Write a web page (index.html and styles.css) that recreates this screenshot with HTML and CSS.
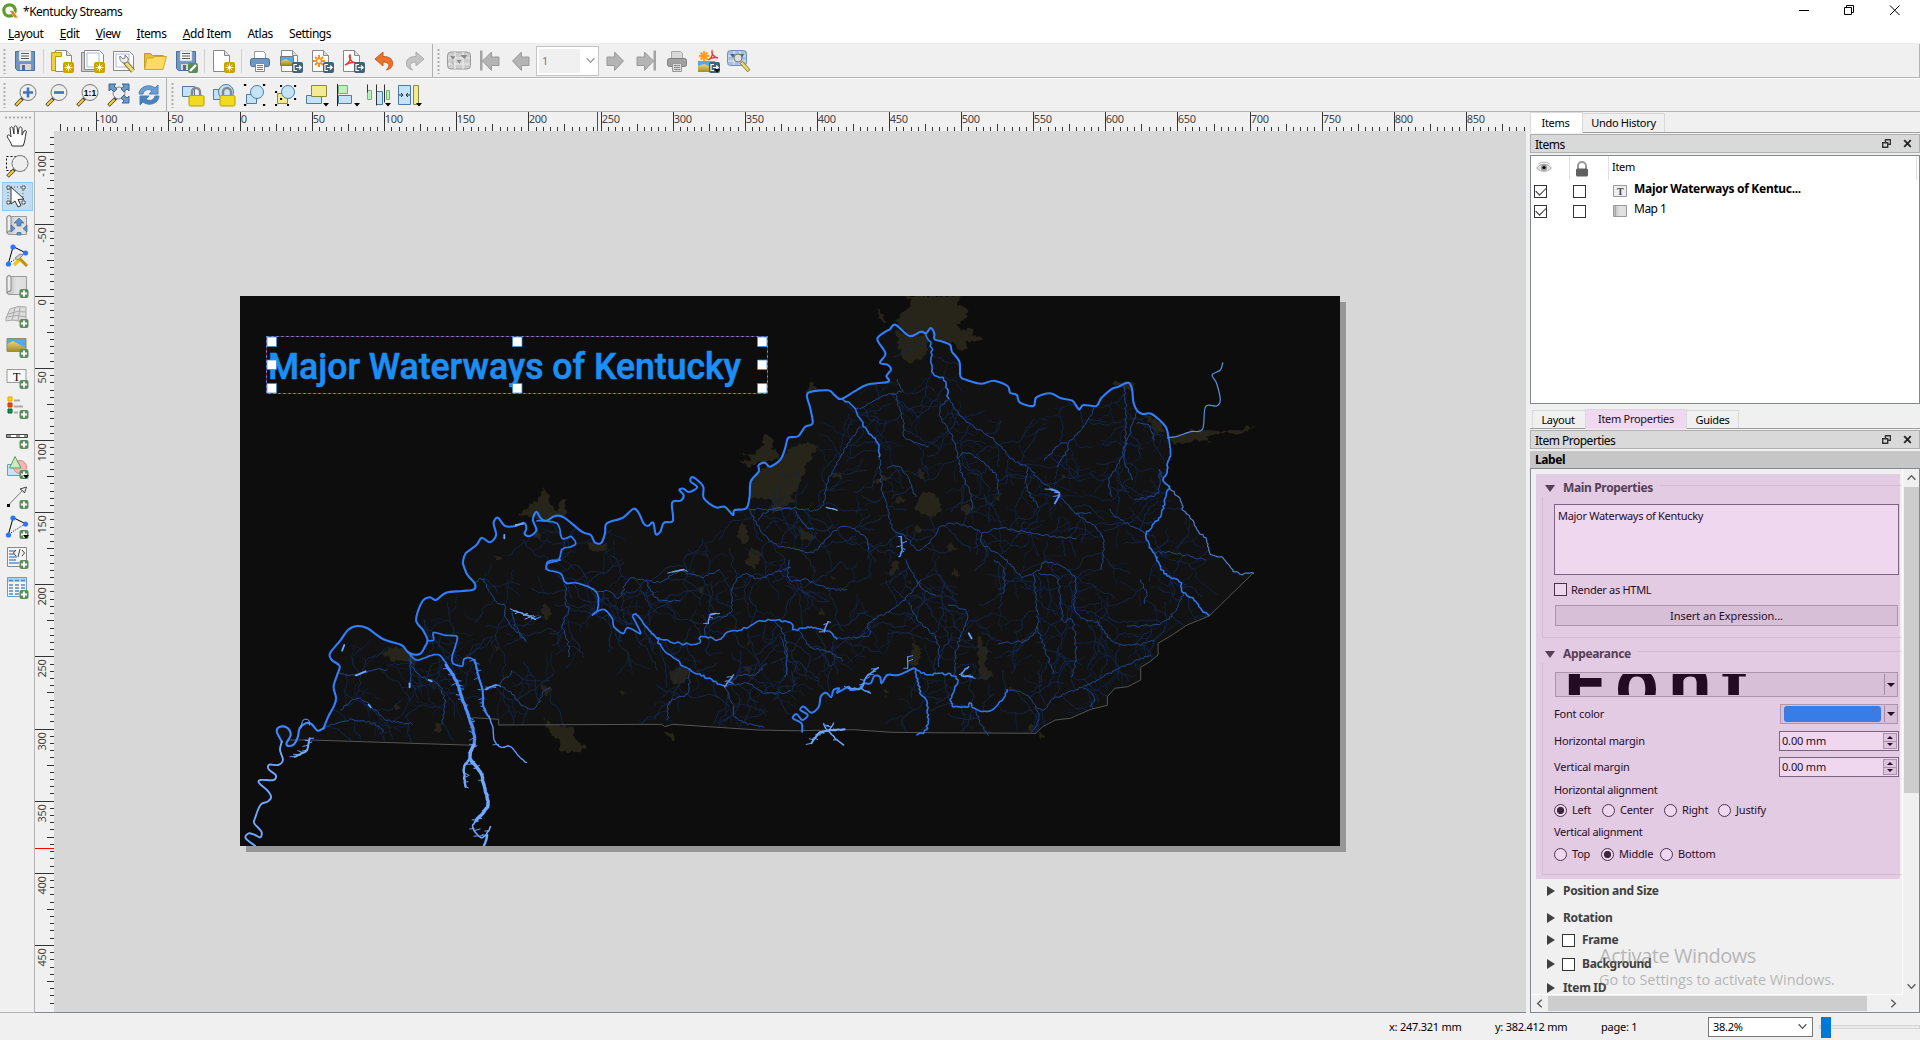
FILE: index.html
```
<!DOCTYPE html>
<html lang="en">
<head>
<meta charset="utf-8">
<title>*Kentucky Streams</title>
<link rel="stylesheet" href="styles.css">
</head>
<body>
<svg width="0" height="0" class="defs">
<defs>
<linearGradient id="paper" x1="0" x2="1"><stop offset="0" stop-color="#bbb"/><stop offset=".5" stop-color="#e2e2e2"/><stop offset="1" stop-color="#ddd"/></linearGradient>
<linearGradient id="sand" x1="0" x2="0" y1="0" y2="1"><stop offset="0" stop-color="#e8d47e"/><stop offset="1" stop-color="#a48c22"/></linearGradient>
<symbol id="floppy" viewBox="0 0 24 24"><path d="M2.5 2.5h19v19h-17l-2-2z" fill="#6d97c4" stroke="#4b6f98"/><path d="M6 2h12v10H6z" fill="#f8f8f8" stroke="#aaa" stroke-width=".6"/><path d="M8 4.500h8M8 7h8M8 9.500h8" stroke="#555"/><path d="M7 15h11v6H7z" fill="#d7d7d7"/><path d="M9 16h3v5H9z" fill="#4b6f98"/></symbol>
<symbol id="sheet" viewBox="0 0 24 24"><path d="M4.500 1.500h11l5 5v16h-16z" fill="#fff" stroke="#888"/><path d="M15.500 1.500v5h5" fill="#ddd" stroke="#888"/></symbol>
<symbol id="star" viewBox="0 0 24 24"><rect x="13" y="13" width="11" height="11" rx="2" fill="#c9a400"/><path d="M18.500 14.500v8M14.500 18.500h8M15.700 15.700l5.600 5.600M21.300 15.700l-5.600 5.600" stroke="#fff3a8"/><circle cx="18.500" cy="18.500" r="1.700" fill="#fff"/></symbol>
<symbol id="exp" viewBox="0 0 24 24"><rect x="13" y="13" width="11" height="11" rx="2" fill="#456277"/><path d="M18 15.500h-3v6h3M17 18.500h5M20 16.500l2.200 2-2.200 2" fill="none" stroke="#fff" stroke-width="1.200"/></symbol>
<symbol id="plus" viewBox="0 0 24 24"><rect x="14.500" y="15" width="9" height="9" rx="2" fill="#5a8c5a"/><path d="M19 16.500v6M16 19.500h6" stroke="#fff" stroke-width="2"/></symbol>
<symbol id="drop" viewBox="0 0 24 24"><path d="M18 20h6l-3 3.500z" fill="#000"/></symbol>
<symbol id="pic" viewBox="0 0 24 24"><path d="M2 5.500h19v13H2z" fill="#57a8e8"/><path d="M2 11l6-3 13 7v3.500H2z" fill="url(#sand)"/><path d="M2 5.500h19v13H2z" fill="none" stroke="#8c8c7a"/></symbol>
<symbol id="printer" viewBox="0 0 24 24"><path d="M6.500 2.500h9l2 2v6h-11z" fill="#fff" stroke="#999"/><rect x="2.500" y="9.500" width="19" height="8" rx="2" fill="#6d97c4" stroke="#4b6f98"/><path d="M7.500 14.500h9v8h-9z" fill="#fff" stroke="#888"/><path d="M9 16.500h6M9 18.500h6M9 20.500h6" stroke="#777"/></symbol>
<symbol id="handleglass" viewBox="0 0 24 24"><path d="M10 15L2.500 22.500" stroke="#444" stroke-width="3.600"/><path d="M8.500 16.500L3 22" stroke="#ffd028" stroke-width="2"/></symbol>
<symbol id="glass" viewBox="0 0 24 24"><use href="#handleglass"/><circle cx="15" cy="9.500" r="8" fill="#eee" stroke="#777"/></symbol>
<symbol id="wrench" viewBox="0 0 24 24"><path d="M13 13l8 9" stroke="#8a7a34" stroke-width="5"/><path d="M14 14l7 8" stroke="#eedc7c" stroke-width="3"/><path d="M8 7l3 3 2-1 0-3 3 3c1 3-1 5-4 5-3 0-5-4-4-7z" fill="#eee" stroke="#777"/></symbol>
<symbol id="arrow" viewBox="0 0 24 24"><path d="M3.500 12L12.500 3v5h7.500v8.500h-7.500v5z" fill="#b4b4b4" stroke="#999"/></symbol>
<symbol id="grid" viewBox="0 0 24 24"><rect x=".5" y="3" width="23" height="17" rx="3.500" fill="#cdcdcd" stroke="#999"/><path d="M8 3v17M16 3v17M1 9h22M1 15h22" stroke="#f0f0f0"/><path d="M3.500 7h4.500l-1 3-2 0zM10 11h4l-1.500 4-1.500-2zM14 6h6l-2 4-3-2zM5.500 12l1.500 4-1.500-1z" fill="#8c8c8c"/></symbol>
<symbol id="lock" viewBox="0 0 24 24"><path d="M11 13V9a4 4 0 0 1 8 0v4" fill="none" stroke="#888" stroke-width="2.500"/><rect x="8" y="12.500" width="15" height="10.500" rx="1.500" fill="#f0dc1e" stroke="#b79d00"/></symbol>
<symbol id="node" viewBox="0 0 24 24"><path d="M3.500 19L8 3M9 3l12 6" stroke="#000" fill="none"/><path d="M4 19l16-10" stroke="#000" stroke-dasharray="1 1.500"/><circle cx="8" cy="3" r="2.600" fill="#2878ff"/><circle cx="20.500" cy="9" r="2.600" fill="#2878ff"/><circle cx="3.500" cy="20" r="2.600" fill="#2878ff"/></symbol>
<symbol id="roll" viewBox="0 0 24 24"><path d="M2 2.500q3-3 4 0h15.500v18H4q-2 0-2-2z" fill="url(#paper)" stroke="#999"/><path d="M2 3q2-3 4 0v14q-3-1-4 2z" fill="#eee" stroke="#888"/></symbol>
<symbol id="float" viewBox="0 0 9 9"><path d="M3.500 3V.8h5v4.500H6" fill="none" stroke="#333" stroke-width="1.400"/><path d="M.7 3.700h5v4.500h-5z" fill="none" stroke="#333" stroke-width="1.400"/></symbol>
<symbol id="close" viewBox="0 0 9 9"><path d="M1.200 1.200l6.600 6.600M7.800 1.200L1.200 7.800" stroke="#222" stroke-width="1.800"/></symbol>
<symbol id="chev" viewBox="0 0 10 10"><path d="M1.500 3l3.500 3.700L8.500 3" fill="none" stroke="#555" stroke-width="1.200"/></symbol>
</defs>
</svg>
<div class="window">
  <header class="titlebar">
    <svg class="logo" viewBox="0 0 16 16"><circle cx="7.500" cy="7.500" r="5.700" fill="none" stroke="#5b9b2f" stroke-width="3.200"/><path d="M7 7h4l5 6v3h-3z" fill="#f0f0d0"/><path d="M8 8h3l4.500 6.500h-3z" fill="#e87a20"/></svg>
    <span class="caption">*Kentucky Streams</span>
    <svg class="winbtns" viewBox="0 0 120 22"><path d="M7 10.500h10" stroke="#000"/><path d="M52.500 7.500h7v7h-7zM54.500 7V5.500h7v7H60" fill="none" stroke="#000"/><path d="M98 5.500l9.500 9.500M107.500 5.500L98 15" stroke="#000"/></svg>
  </header>
  <nav class="menubar"><span><u>L</u>ayout</span><span><u>E</u>dit</span><span><u>V</u>iew</span><span><u>I</u>tems</span><span><u>A</u>dd Item</span><span>Atlas</span><span>Settings</span></nav>
  <div class="toolbar">
    <i class="grip"></i>
    <svg class="ic"><use href="#floppy"/></svg><i class="sep"></i>
    <svg class="ic" viewBox="0 0 24 24"><use href="#sheet" x="1"/><path d="M1.500 3.500v18h4v-14h6v-4z" fill="#f2cf3e" stroke="#c39b0a"/><use href="#star"/></svg>
    <svg class="ic" viewBox="0 0 24 24"><path d="M.5 3.500h17v19h-17z" fill="#ccc" stroke="#888"/><path d="M3.500 1.500h15l4 4v15h-19z" fill="#fff" stroke="#888"/><path d="M6 4h12v14H6z" fill="none" stroke="#a9b8e8"/><use href="#star"/></svg>
    <svg class="ic" viewBox="0 0 24 24"><path d="M1.500 2.500h16l4 4v15h-20z" fill="#fff" stroke="#888"/><path d="M4 5h13v13H4z" fill="none" stroke="#a9b8e8"/><use href="#wrench"/></svg>
    <svg class="ic" viewBox="0 0 24 24"><path d="M1.500 20V4.500h6l2 2h11v3" fill="#e5bf3d" stroke="#bf9b28"/><path d="M1.500 20.500L4 9h6l2-1.500h11.500l-3.500 13z" fill="#fcdb62" stroke="#cfa92c"/></svg>
    <svg class="ic" viewBox="0 0 24 24"><use href="#floppy"/><rect x="14" y="14" width="10" height="10" rx="2" fill="#5a8c5a"/><path d="M16 22l6-6" stroke="#fff" stroke-width="2.400"/></svg>
    <i class="sep"></i>
    <svg class="ic" viewBox="0 0 24 24"><use href="#sheet" x="-2"/><use href="#star"/></svg>
    <i class="sep"></i>
    <svg class="ic"><use href="#printer"/></svg>
    <svg class="ic" viewBox="0 0 24 24"><use href="#sheet" x="-2"/><path d="M1.500 7.500h13v9h-13z" fill="#57a8e8" stroke="#777"/><path d="M2 12l5-2 7 4v2H2z" fill="url(#sand)"/><use href="#exp"/></svg>
    <svg class="ic" viewBox="0 0 24 24"><use href="#sheet" x="-2"/><path d="M9 6v12M3 12h12M5 8l8 8M13 8l-8 8" stroke="#ff8c1a" stroke-width="2"/><circle cx="9" cy="12" r="1.800" fill="#fff"/><use href="#exp"/></svg>
    <svg class="ic" viewBox="0 0 24 24"><use href="#sheet" x="-2"/><path d="M4 16c4-2 6-6 5-10-2 1 1 8 6 8-3-1-7 0-11 2z" fill="none" stroke="#f5342a" stroke-width="1.500"/><use href="#exp"/></svg>
    <svg class="ic" viewBox="0 0 24 24"><path d="M3 10l8-7v4.500c7 0 10 3 9.500 8q-.5 4-6 5.500c4-4 3-8-3.500-8V17z" fill="#e8742c" stroke="#c75c1c"/></svg>
    <svg class="ic" viewBox="0 0 24 24"><path d="M21 10l-8-7v4.500c-7 0-10 3-9.500 8q.5 4 6 5.500c-4-4-3-8 3.500-8V17z" fill="#c4c4c4" stroke="#aaa"/></svg>
    <i class="grip split"></i>
    <svg class="ic"><use href="#grid"/></svg>
    <svg class="ic" viewBox="0 0 24 24"><path d="M2 1.500h2.500v20H2z" fill="#a4a4a4"/><use href="#arrow" x="1"/></svg>
    <svg class="ic"><use href="#arrow"/></svg>
    <span class="pagebox"><b>1</b><svg viewBox="0 0 10 10"><use href="#chev"/></svg></span>
    <svg class="ic flip"><use href="#arrow"/></svg>
    <svg class="ic flip" viewBox="0 0 24 24"><path d="M2 1.500h2.500v20H2z" fill="#a4a4a4"/><use href="#arrow" x="1"/></svg>
    <svg class="ic gray"><use href="#printer"/></svg>
    <svg class="ic" viewBox="0 0 24 24"><path d="M8 2v10M3 7h10M4.500 3.500l7 7M11.500 3.500l-7 7" stroke="#ff9a1a" stroke-width="1.800"/><path d="M12 11c4-2 5-5 4-9-1 2 2 7 6 7-3-1-7 0-10 2z" fill="none" stroke="#f5342a" stroke-width="1.300"/><path d="M2 12h17v11H2z" fill="#57a8e8"/><path d="M2 17l6-2 11 4v4H2z" fill="url(#sand)"/><use href="#exp"/><path d="M18 20h6l-3 3.500z"/></svg>
    <svg class="ic" viewBox="0 0 24 24"><rect x=".5" y="1.500" width="19" height="15" rx="3" fill="#a9bfe0" stroke="#6f8fbe"/><path d="M7 2v14M13 2v14M1 7h18M1 12h18" stroke="#e6eefa"/><path d="M3 5h5l-2 4zM11 5h6l-2 4z" fill="#45658e"/><circle cx="11" cy="9" r="4" fill="#ddd" stroke="#777"/><path d="M14 13l8 9" stroke="#8a7a34" stroke-width="4"/><path d="M14.500 13.500l7 8" stroke="#eedc7c" stroke-width="2.400"/></svg>
    <i class="endcap"></i>
  </div>
  <div class="toolbar second">
    <i class="grip"></i>
    <svg class="ic" viewBox="0 0 24 24"><use href="#glass"/><path d="M15 4.500v10M10 9.500h10" stroke="#4273b8" stroke-width="2.600"/></svg>
    <svg class="ic" viewBox="0 0 24 24"><use href="#glass"/><path d="M10 9.500h10" stroke="#4273b8" stroke-width="2.600"/></svg>
    <svg class="ic" viewBox="0 0 24 24"><use href="#glass"/><text x="15" y="13.200" text-anchor="middle" class="oneone">1:1</text></svg>
    <svg class="ic" viewBox="0 0 24 24"><use href="#handleglass"/><circle cx="13" cy="10" r="6" fill="#eee" stroke="#888"/><path d="M3 1h7L8 3l3 3-3 3-3-3-2 2zM23 1h-7l2 2-3 3 3 3 3-3 2 2zM23 20h-7l2-2-3-3 3-3 3 3 2-2z" fill="#6d97c4" stroke="#3c6496"/></svg>
    <svg class="ic" viewBox="0 0 24 24"><path d="M2 11C2 4 12 0 18 5l3-3v9h-9l3-3c-4-3-8-1-9 3z" fill="#6b9fd4" stroke="#4b80b8"/><path d="M22 13c0 7-10 11-16 6l-3 3v-9h9l-3 3c4 3 8 1 9-3z" fill="#4a80bd" stroke="#4b80b8"/></svg>
    <i class="grip split two"></i>
    <svg class="ic" viewBox="0 0 24 24"><path d="M1.500 3.500h12v10h-12z" fill="#c4e3f7" stroke="#4d7ba6"/><use href="#lock"/></svg>
    <svg class="ic" viewBox="0 0 24 24"><path d="M1.500 6.500h10v10h-10z" fill="#c4e3f7" stroke="#4d7ba6"/><circle cx="14" cy="9" r="7.500" fill="#c4e3f7" stroke="#4d7ba6"/><use href="#lock"/></svg>
    <svg class="ic" viewBox="0 0 24 24"><path d="M3.500 11.500h10v9h-10z" fill="#c4e3f7" stroke="#4d7ba6"/><circle cx="14" cy="9" r="6.500" fill="#c4e3f7" stroke="#4d7ba6"/><path d="M2 2h.1M21 2h.1M2 22h.1M21 22h.1" stroke="#000" stroke-width="2.200" stroke-linecap="square"/></svg>
    <svg class="ic" viewBox="0 0 24 24"><path d="M3.500 10.500h10v10h-10z" fill="#f3eb94" stroke="#8b8740"/><circle cx="14" cy="9" r="6.500" fill="#c4e3f7" stroke="#4d7ba6"/><path d="M7 3h.1M21 3h.1M7 16h.1M21 16h.1M2 9h.1M2 22h.1M14 22h.1" stroke="#000" stroke-width="2" stroke-linecap="square"/></svg>
    <svg class="ic" viewBox="0 0 24 24"><path d="M1.500 12.500h15v8h-15z" fill="#c4e3f7" stroke="#4d7ba6"/><path d="M6.500 2.500h15v11h-15z" fill="#f3eb94" stroke="#8b8740"/><use href="#drop"/></svg>
    <svg class="ic" viewBox="0 0 24 24"><path d="M2.500 2.500h9v8h-9z" fill="#bdf0bd" stroke="#6fb36f"/><path d="M2.500 12.500h13v8h-13z" fill="#c4e3f7" stroke="#4d7ba6"/><path d="M1.500 1v22" stroke="#222"/><use href="#drop"/></svg>
    <svg class="ic" viewBox="0 0 24 24"><path d="M.5 7.500h4v9h-4zM19.500 7.500h3v9h-3z" fill="#bdf0bd" stroke="#6fb36f"/><path d="M9.500 8.500h6v13h-6z" fill="#c4e3f7" stroke="#4d7ba6"/><path d="M.5 1.500v8M9.500 1.500v21M17.500 1.500v18" stroke="#333"/><use href="#drop"/></svg>
    <svg class="ic" viewBox="0 0 24 24"><path d="M.5 2.500h12v19H.5z" fill="#c4e3f7" stroke="#4d7ba6"/><path d="M1 12h4M12 12H8M3 10l2 2-2 2M10 10l-2 2 2 2" fill="none" stroke="#234"/><path d="M15.500 2.500h5v19h-5z" fill="#f3eb94" stroke="#8b8740"/><use href="#drop"/></svg>
  </div>
  <main class="body">
    <aside class="tools">
      <i class="hgrip"></i>
      <svg class="ic" viewBox="0 0 24 24"><path d="M7 22c-1-4-4-7-5-10 1-2 3-1 4 1L5 4c1-2 3-1 3 1l1 5V3c1-2 3-1 3 0l1 7 1-6c1-2 3-1 3 1v6l2-4c2-1 3 0 2 2-1 5-1 9-3 13z" fill="#fff" stroke="#333"/></svg>
      <svg class="ic" viewBox="0 0 24 24"><path d="M1.500 2.500h18v14h-18z" fill="none" stroke="#000" stroke-dasharray="2 2"/><use href="#glass"/></svg>
      <span class="picked"><svg class="ic" viewBox="0 0 24 24"><path d="M3 3h15v15H3z" fill="none" stroke="#555" stroke-dasharray="1 2"/><path d="M2 2h3v3H2zM17 2h3v3h-3zM2 17h3v3H2zM17 17h3v3h-3z" fill="#fff" stroke="#555"/><path d="M6 3v17l4-3 3 6 3-1.500-3-6 6-.5z" fill="#fff" stroke="#333"/></svg></span>
      <svg class="ic" viewBox="0 0 24 24"><use href="#roll"/><path d="M14 4l5 5h-3v3h-4V9H9zM6 11l4 3.500L6 18zM22 11l-4 3.500 4 3.500zM12 21v-2.500h4V21z" fill="#5f8fc6" stroke="#446c9e" stroke-width=".7"/></svg>
      <svg class="ic" viewBox="0 0 24 24"><use href="#node"/><path d="M9 21l7-7" stroke="#eec51e" stroke-width="3.500"/><path d="M15 15l7 7" stroke="#c88a18" stroke-width="3"/><path d="M10 14l5-4 3 1-5 5z" fill="#ccc" stroke="#888"/></svg>
      <svg class="ic" viewBox="0 0 24 24"><use href="#roll"/><use href="#plus"/></svg>
      <svg class="ic" viewBox="0 0 24 24"><path d="M1 14l4-9q8-4 16-2v13l-5 2q-6-3-15-1z" fill="#ddd" stroke="#aaa"/><path d="M3 10q10-4 18-2M2 13q10-3 19 0M10 4L7 16M15 3l-2 14" fill="none" stroke="#aaa"/><use href="#plus"/></svg>
      <svg class="ic" viewBox="0 0 24 24"><use href="#pic" y="-1"/><use href="#plus"/></svg>
      <svg class="ic" viewBox="0 0 24 24"><path d="M2 4.500h19v13H2z" fill="#f7f7f7" stroke="#999"/><text x="11.500" y="15.500" text-anchor="middle" class="tee">T</text><use href="#plus"/></svg>
      <svg class="ic" viewBox="0 0 24 24"><path d="M3 2h4v4H3z" fill="#ffd800" stroke="#e8a000"/><path d="M3 8h4v4H3z" fill="#f54a00" stroke="#c03000"/><path d="M3 14h4v4H3z" fill="#0c9a50" stroke="#065c30"/><path d="M9 5.500h6M9 11.500h9M9 17.500h4" stroke="#aaa" stroke-width="1.800"/><use href="#plus"/></svg>
      <svg class="ic" viewBox="0 0 24 24"><path d="M1.500 9.500h21v3h-21z" fill="#999" stroke="#444"/><path d="M6 11h5M15 11h4" stroke="#fff" stroke-width="2"/><use href="#plus"/></svg>
      <svg class="ic" viewBox="0 0 24 24"><path d="M2.500 9.500h14v11h-14z" fill="#c4e3f7" stroke="#6a9cc6"/><circle cx="15" cy="12" r="6.500" fill="#f5b5b5" stroke="#dc8686"/><path d="M10 1.500L16 13H4.500z" fill="#c0f2c0" stroke="#5f9a5f"/><use href="#plus"/><use href="#drop"/></svg>
      <svg class="ic" viewBox="0 0 24 24"><path d="M3.500 20L18 5" stroke="#777"/><path d="M2 19h3v3H2z"/><path d="M15 4l6.500-2-2 6-1.500-2z" fill="#eee" stroke="#444"/><use href="#plus"/></svg>
      <svg class="ic" viewBox="0 0 24 24"><use href="#node"/><use href="#plus"/><use href="#drop"/></svg>
      <svg class="ic" viewBox="0 0 24 24"><path d="M2.500 2.500h19v19h-19z" fill="#f4f4f4" stroke="#888"/><path d="M4 6h6M4 9h5M4 12h8M4 15h7M4 18h10" stroke="#5f8fc6" stroke-width="1.500"/><path d="M11 5L8.500 8l2.500 3M17 5l2.500 3-2.500 3M15 4l-2 8" fill="none" stroke="#444"/><use href="#plus"/></svg>
      <svg class="ic" viewBox="0 0 24 24"><path d="M2.500 2.500h19v19h-19z" fill="#eef5fb" stroke="#6a9cc6"/><path d="M3 3h18v4H3z" fill="#a9d4ee"/><path d="M4 5.500h4M10 5.500h4M16 5.500h4M4 10h4M10 10h4M16 10h4M4 13h4M10 13h4M16 13h4M4 16h4M10 16h4M4 19h4M10 19h4" stroke="#5f86ae" stroke-width="1.300"/><use href="#plus"/></svg>
    </aside>
    <section class="view">
      <svg class="hruler" id="hruler" width="1491" height="19"></svg>
      <div class="viewrow">
        <svg class="vruler" id="vruler" width="19" height="881"></svg>
        <div class="canvas">
          <svg class="page" id="map" width="1100" height="550" viewBox="0 0 1100 550">
            <defs><clipPath id="state"><path id="statePath"/></clipPath></defs>
            <rect width="1100" height="550" fill="#0d0d0d"/>
            <path id="stateFill" fill="#121212"/>
            <g id="urban" fill="#272419"></g>
            <g id="minor" clip-path="url(#state)"></g>
            <path id="border" fill="none" stroke="#555" stroke-width="1"/>
            <g id="rivers"></g>
            <text x="28" y="82.500" class="maptitle" textLength="473" lengthAdjust="spacingAndGlyphs">Major Waterways of Kentucky</text>
            <rect x="26.500" y="40.500" width="501" height="57" fill="none" stroke="#6e0f4e"/>
            <rect x="26.500" y="40.500" width="501" height="57" fill="none" stroke="#58a8e0" stroke-dasharray="2 3"/>
            <path fill="#fff" stroke="#3a8fd0" stroke-width=".8" d="M27 41h9.500v9.500H27zM272.500 41h9.500v9.500h-9.500zM517.500 41h9.500v9.500h-9.500zM27 64h9.500v9.500H27zM517.500 64h9.500v9.500h-9.500zM27 87.500h9.500v9.500H27zM272.500 87.500h9.500v9.500h-9.500zM517.500 87.500h9.500v9.500h-9.500z"/>
          </svg>
        </div>
      </div>
    </section>
    <aside class="docks">
      <div class="tabs first"><span class="tab on">Items</span><span class="tab undo">Undo History</span></div>
      <div class="docktitle"><span>Items</span><svg class="di"><use href="#float"/></svg><svg class="di"><use href="#close"/></svg></div>
      <div class="tree">
        <div class="thead">
          <span><svg width="16" height="13" viewBox="0 0 16 13"><path d="M.5 7Q8-1 15.500 7 8 14 .5 7z" fill="#e6e6e6" stroke="#aaa"/><path d="M2 3Q8-1 14 3" fill="none" stroke="#bbb"/><circle cx="8" cy="6.500" r="3.200" fill="#999"/><circle cx="8" cy="6.500" r="1.600"/></svg></span>
          <span><svg width="14" height="16" viewBox="0 0 14 16"><path d="M3 8V5a4 4 0 0 1 8 0v3" fill="none" stroke="#999" stroke-width="2"/><rect x="1" y="7.500" width="12" height="8" rx="1.500" fill="#606060"/></svg></span>
          <span>Item</span>
        </div>
        <div class="trow"><i class="cb ck"></i><i class="cb"></i><svg width="14" height="12" viewBox="0 0 14 12"><path d="M.5.5h13v11H.5z" fill="#eee" stroke="#999"/><text x="7" y="10" text-anchor="middle" class="teesm">T</text></svg><b>Major Waterways of Kentuc...</b></div>
        <div class="trow"><i class="cb ck"></i><i class="cb"></i><svg width="14" height="12" viewBox="0 0 14 12"><path d="M.5.5h13v11H.5z" fill="url(#paper)" stroke="#999"/><path d="M2.500 1v10" stroke="#999" stroke-width=".7"/></svg><span>Map 1</span></div>
      </div>
      <div class="tabs lower"><span class="tab lay">Layout</span><span class="tab prop">Item Properties</span><span class="tab gd">Guides</span></div>
      <div class="docktitle"><span>Item Properties</span><svg class="di"><use href="#float"/></svg><svg class="di"><use href="#close"/></svg></div>
      <div class="strip">Label</div>
      <div class="scroll">
        <div class="viewport">
          <div class="group main">
            <h3><i class="tri"></i><span>Main Properties</span><hr></h3>
            <div class="gbody">
              <div class="textarea">Major Waterways of Kentucky</div>
              <div class="check"><i class="cb"></i>Render as HTML</div>
              <div class="btn">Insert an Expression...</div>
            </div>
          </div>
          <div class="group app">
            <h3><i class="tri"></i><span>Appearance</span><hr></h3>
            <div class="gbody">
              <div class="fontbtn"><span class="clip"><b>Font</b></span><i class="dd"></i></div>
              <div class="field color"><label>Font color</label><span class="colorbtn"><i class="swatch"></i><i class="dd"></i></span></div>
              <div class="field"><label>Horizontal margin</label><span class="spin">0.00 mm<i></i></span></div>
              <div class="field"><label>Vertical margin</label><span class="spin">0.00 mm<i></i></span></div>
              <div class="lbl ha">Horizontal alignment</div>
              <div class="radios"><i class="rb sel"></i><span class="r1">Left</span><i class="rb"></i><span class="r2">Center</span><i class="rb"></i><span class="r3">Right</span><i class="rb"></i><span>Justify</span></div>
              <div class="lbl va">Vertical alignment</div>
              <div class="radios"><i class="rb"></i><span class="r4">Top</span><i class="rb sel"></i><span class="r5">Middle</span><i class="rb"></i><span>Bottom</span></div>
            </div>
          </div>
          <div class="fold ps"><i class="tri side"></i><span>Position and Size</span></div>
          <div class="fold rot"><i class="tri side"></i><span>Rotation</span></div>
          <div class="fold"><i class="tri side"></i><i class="cb"></i><span>Frame</span></div>
          <div class="fold"><i class="tri side"></i><i class="cb"></i><span>Background</span></div>
          <div class="fold"><i class="tri side"></i><span>Item ID</span></div>
          <div class="highlight"></div>
        </div>
        <div class="vbar"><svg class="up" viewBox="0 0 10 10"><use href="#chev"/></svg><i></i><svg viewBox="0 0 10 10"><use href="#chev"/></svg></div>
        <div class="hbar"><svg class="left" viewBox="0 0 10 10"><use href="#chev"/></svg><i></i><svg class="right" viewBox="0 0 10 10"><use href="#chev"/></svg></div>
      </div>
      <div class="watermark"><p>Activate Windows</p><span>Go to Settings to activate Windows.</span></div>
    </aside>
  </main>
  <footer class="status"><span class="sx">x: 247.321 mm</span><span class="sy">y: 382.412 mm</span><span class="sp">page: 1</span><span class="combo">38.2%<svg viewBox="0 0 10 10"><use href="#chev"/></svg></span><span class="slider"><i></i></span></footer>
</div>
<script src="map.js"></script>
</body>
</html>
```
FILE: styles.css
```
* { box-sizing: border-box; }
body { margin: 0; background: #f0f0f0; color: #000; font: 11px/14px "Noto Sans", sans-serif; letter-spacing: -0.3px; overflow: hidden; }
.defs { position: absolute; }
.window { width: 1920px; height: 1040px; display: flex; flex-direction: column; overflow: hidden; }
.titlebar { height: 22px; background: #fff; display: flex; align-items: center; padding-left: 2px; }
.logo { width: 16px; height: 16px; }
.caption { margin: 2px auto 0 5px; font: 12px/16px "Noto Sans", sans-serif; letter-spacing: -0.48px; }
.winbtns { width: 120px; height: 22px; margin-right: 8px; }
.menubar { height: 22px; background: #fff; border-bottom: 1px solid #eee; display: flex; padding: 4px 8px 0; font: 12px/16px "Noto Sans", sans-serif; letter-spacing: -0.45px; }
.menubar span { margin-right: 16.300px; white-space: nowrap; }
.toolbar { height: 34px; border-bottom: 1px solid #b4b4b4; display: flex; align-items: center; padding-left: 3px; }
.toolbar.second { border-top: 1px solid #fff; }
.toolbar .ic { width: 24px; height: 24px; margin: 0 3.500px; flex: none; }
.grip { width: 3px; height: 26px; margin-right: 3.500px; background: radial-gradient(circle, #a8a8a8 1px, transparent 1.200px) 0 0/3px 4px; flex: none; }
.grip.split { margin: 0 3px 0 6.500px; position: relative; }
.grip.split::before { content: ""; position: absolute; left: -5px; top: -4px; width: 1px; height: 34px; background: #b0b0b0; }
.sep { width: 1px; height: 24px; margin: 0 2.500px; background: #cfcfcf; flex: none; }
.pagebox { width: 63px; height: 30px; margin: 0; border: 1px solid #c4c4c4; background: #fff; display: flex; align-items: center; padding: 2px; color: #777; }
.pagebox b { background: #f0f0f0; width: 41px; height: 24px; padding: 5px 3px; font-weight: 400; }
.pagebox svg { width: 11px; height: 11px; margin-left: 5px; opacity: .6; }
.flip { transform: scaleX(-1); }
.gray { filter: grayscale(1) brightness(1.200) contrast(.7); }
.endcap { width: 1px; height: 34px; background: #b4b4b4; margin-left: auto; }
.oneone { font: 700 8.500px "Liberation Sans", sans-serif; letter-spacing: 0; }
.tee { font: 12px "Liberation Serif", serif; }
.teesm { font: 700 10px "Liberation Serif", serif; fill: #444; }
.body { display: flex; height: 901px; }
.tools { width: 35px; border-right: 1px solid #b4b4b4; border-bottom: 1px solid #b4b4b4; display: flex; flex-direction: column; align-items: center; padding-top: 4px; }
.tools > .ic { width: 24px; height: 24px; margin: 3px 0 3.080px; flex: none; }
.picked { width: 31px; height: 29px; margin: .5px 0; border: 1px solid #8fc7f5; background: #c2dcf2; display: flex; align-items: center; justify-content: center; flex: none; }
.picked .ic { width: 24px; height: 24px; }
.hgrip { width: 27px; height: 3px; margin-bottom: 2px; background: radial-gradient(circle, #a8a8a8 1px, transparent 1.200px) 0 0/4px 3px; flex: none; }
.view { width: 1491px; display: flex; flex-direction: column; border-bottom: 1px solid #828790; }
.hruler, .vruler { display: block; font: 11px "Noto Sans", sans-serif; letter-spacing: -0.3px; fill: #444; }
.viewrow { display: flex; height: 881px; }
.canvas { flex: 1; background: #d7d7d7; padding: 165px 0 0 186px; overflow: hidden; }
.page { display: block; box-shadow: 6px 6px 0 #979797; }
.maptitle { font: 500 36.500px Roboto, sans-serif; letter-spacing: 0; fill: #1b8ff8; stroke: #1b8ff8; stroke-width: .6px; }
.docks { width: 394px; padding-left: 4px; position: relative; }
.tabs { display: flex; align-items: flex-end; border-bottom: 1px solid #a0a0a0; height: 21px; }
.tab { height: 18px; border: 1px solid #d9d9d9; border-bottom: 0; text-align: center; line-height: 17px; background: #f0f0f0; margin-right: -1px; }
.tab.on { width: 53px; height: 21px; background: #fff; margin-bottom: -1px; line-height: 19px; padding-right: 2px; }
.undo { width: 83px; height: 19px; line-height: 18px; }
.lower { margin-top: 4px; padding-left: 2px; }
.lay { width: 54px; padding-right: 2px; }
.prop { width: 102px; height: 20px; background: #f0d8f0; margin-bottom: -1px; line-height: 18px; color: #230c23; }
.gd { width: 53px; }
.docktitle { height: 19px; margin-top: 1px; border: 1px solid #b0b0b0; background: #d9d9d9; display: flex; align-items: center; padding: 2px 7px 0 4px; font-size: 12px; letter-spacing: -0.5px; }
.docktitle span { margin-right: auto; }
.di { width: 9px; height: 9px; margin: -3px 0 0 12px; }
.tree { height: 249px; margin-top: 2px; border: 1px solid #828790; background: #fff; }
.thead { display: flex; height: 24px; padding-right: 2px; }
.thead span { width: 39px; border-right: 1px solid #e0e0e0; padding: 5px 5px; height: 24px; }
.thead span:last-child { flex: 1; padding: 4px 3px; }
.trow { display: flex; height: 20px; align-items: center; padding: 0 0 0 3px; font-size: 12px; letter-spacing: -0.5px; }
.thead + .trow { margin-top: 1px; }
.trow .cb { margin-right: 26px; }
.trow svg { margin: 0 7px 0 1px; }
.trow b, .trow span { margin-top: -5px; }
.trow b { letter-spacing: -0.3px; }
.cb { width: 13px; height: 13px; border: 1px solid #333; background: #fff; flex: none; }
.ck { background: #fff; position: relative; }
.ck::after { content: ""; position: absolute; left: 1px; top: 1px; width: 9px; height: 5px; border: solid #333; border-width: 0 0 1.300px 1.300px; transform: rotate(-45deg); }
.strip { height: 17px; margin-top: 2px; background: #c6c6c6; font: 700 12px/17px "Noto Sans", sans-serif; padding-left: 5px; letter-spacing: -0.4px; }
.scroll { height: 545px; border: 1px solid #828790; display: grid; grid-template: 526px 17px / 372px 16px; }
.viewport { overflow: hidden; position: relative; border-right: 1px solid #fff; border-bottom: 1px solid #fff; }
.group h3 { margin: 0; height: 18px; display: flex; align-items: center; font-size: 12px; letter-spacing: -0.35px; color: #404040; white-space: nowrap; }
.group hr { flex: 1; border: 0; border-top: 1px solid #dcdcdc; margin: -6px 0 0 7px; }
.main { padding: 10px 0 0 14px; height: 169px; }
.app { padding: 7px 0 0 14px; height: 237px; }
.tri { width: 0; height: 0; border: solid transparent; border-width: 7px 5.500px 0; border-top-color: #404040; margin-right: 8px; flex: none; }
.tri.side { border-width: 5.500px 0 5.500px 8px; border-left-color: #404040; border-top-color: transparent; margin: 0 8px 0 2px; }
.gbody { margin-left: -3px; padding: 9px 3px 0 11px; border-left: 1px solid #dcdcdc; border-bottom: 1px solid #dcdcdc; }
.main .gbody { height: 141px; padding-top: 7px; }
.app .gbody { height: 212px; padding-top: 10px; }
.textarea { height: 71px; border: 1px solid #6e6e76; background: #fff; padding: 4px 3px; }
.check { display: flex; align-items: center; gap: 4px; height: 13px; margin: 8px 0 9px; }
.btn { height: 21px; margin: 0 1px; border: 1px solid #adadad; background: #e1e1e1; text-align: center; line-height: 20px; letter-spacing: -.05px; }
.fontbtn { height: 25px; margin: -1px 1px 7px; border: 1px solid #adadad; background: #e1e1e1; display: flex; padding: 1px 0; }
.clip { flex: 1; height: 21px; overflow: hidden; padding-left: 8px; }
.clip b { display: block; font: 700 76px/22px Roboto, sans-serif; letter-spacing: 10.500px; margin-top: -2px; }
.dd { width: 13px; height: 21px; border-left: 1px solid #a0a0a0; position: relative; flex: none; }
.dd::after { content: ""; position: absolute; left: 2px; top: 9px; border: solid transparent; border-width: 4px 4px 0; border-top-color: #000; }
.field { display: flex; justify-content: space-between; align-items: center; height: 20px; margin-bottom: 6px; letter-spacing: -0.18px; }
.field.color { margin-bottom: 7px; }
.colorbtn { width: 118px; height: 20px; border: 1px solid #adadad; background: #e1e1e1; margin-right: 1px; display: flex; align-items: center; padding-left: 3px; }
.swatch { width: 98px; height: 16px; border-radius: 3px; background: #1b8cf7; margin-right: 3px; }
.colorbtn .dd { height: 16px; }
.colorbtn .dd::after { top: 6px; }
.spin { width: 120px; height: 20px; border: 1px solid #6e6e76; background: #fff; padding: 2px; position: relative; }
.spin i { position: absolute; right: 1px; top: 1px; width: 14px; height: 16px; border: 1px solid #aaa; background: linear-gradient(#aaa,#aaa) 0 7px/100% 1px no-repeat #e8e8e8; }
.spin i::before, .spin i::after { content: ""; position: absolute; left: 3px; border: solid transparent; }
.spin i::before { top: 2px; border-width: 0 3px 3px; border-bottom-color: #000; }
.spin i::after { bottom: 2px; border-width: 3px 3px 0; border-top-color: #000; }
.lbl { height: 14px; }
.ha { margin-top: 0; }
.radios { display: flex; align-items: center; height: 14px; margin-top: 6px; letter-spacing: -.2px; }
.va { margin-top: 8px; }
.va + .radios { margin-top: 8px; }
.rb { width: 13px; height: 13px; border: 1px solid #333; border-radius: 50%; background: #fff; margin-right: 5px; flex: none; }
.rb.sel { background: radial-gradient(circle, #222 3.300px, #fff 4px); }
.radios span { white-space: nowrap; }
.r1 { width: 30px; } .r2 { width: 44px; } .r3 { width: 36px; } .r4 { width: 29px; } .r5 { width: 41px; }
.fold { height: 24px; padding-left: 14px; display: flex; align-items: center; font-weight: 700; font-size: 12px; letter-spacing: -0.3px; color: #404040; }
.fold .cb { margin: 0 7px 0 -1px; }
.ps { height: 32px; }
.rot { height: 21px; }
.highlight { position: absolute; left: 5px; top: 5px; width: 364px; height: 405px; background: rgba(175, 58, 175, .2); }
.vbar { display: flex; flex-direction: column; align-items: center; justify-content: space-between; padding: 3px 0 3px; }
.vbar svg, .hbar svg { width: 11px; height: 11px; stroke-width: 2; }
.vbar i { width: 15px; height: 306px; background: #cdcdcd; margin-bottom: 187px; margin-top: 2px; }
.up { transform: rotate(180deg); }
.hbar { display: flex; align-items: center; padding-left: 3px; }
.hbar i { width: 319px; height: 15px; background: #cdcdcd; margin: 0 21px 0 3px; }
.left { transform: rotate(90deg); }
.right { transform: rotate(-90deg); }
.watermark { position: absolute; left: 73px; top: 832px; color: rgba(120,120,120,.5); font: 14.500px/20px "Open Sans", sans-serif; letter-spacing: -0.05px; white-space: nowrap; }
.watermark p { margin: 0 0 2px; font-size: 20px; line-height: 24px; letter-spacing: -0.45px; }
.status { height: 27px; display: flex; align-items: center; padding-left: 1389px; letter-spacing: -0.25px; white-space: nowrap; }
.sx, .sy { width: 106px; }
.sp { width: 107px; }
.combo { width: 105px; height: 20px; border: 1px solid #777; background: #fff; padding: 2px 4px; display: flex; align-items: center; justify-content: space-between; }
.combo svg { width: 11px; height: 11px; }
.slider { width: 101px; height: 4px; margin-left: 6px; border: 1px solid #d6d6d6; background: #e9e9e9; position: relative; }
.slider i { position: absolute; left: 1px; top: -9px; width: 10px; height: 21px; background: #0078d7; }
```
FILE: map.js
```
const NS = "http://www.w3.org/2000/svg";
const $ = id => document.getElementById(id);
function add(parent, tag, attrs, text) {
  const e = document.createElementNS(NS, tag);
  for (const k in attrs) e.setAttribute(k, attrs[k]);
  if (text !== undefined) e.textContent = text;
  parent.appendChild(e);
}

/* Rulers: a tick every 5 mm, a longer one at 25 mm, a label at 50 mm */
const MM = 1.4424;
for (let v = -125; v <= 895; v += 5) {
  const x = Math.floor(205.4 + v * MM) + .5;
  if (x > 1491) break;
  const h = v % 50 === 0 ? 19 : v % 25 === 0 ? 7 : 4;
  add($("hruler"), "path", { d: `M${x} ${19 - h}V19`, stroke: "#333" });
  if (v % 50 === 0) add($("hruler"), "text", { x: x + (v < 0 ? -.5 : .2), y: 11 }, v);
}
add($("hruler"), "path", { d: "M562.5 0V19", stroke: "#f00" });
for (let v = -115; v <= 490; v += 5) {
  const y = Math.floor(165.3 + v * MM) + .5;
  const w = v % 50 === 0 ? 19 : v % 25 === 0 ? 7 : 4;
  add($("vruler"), "path", { d: `M${19 - w} ${y}H19`, stroke: "#333" });
  if (v % 50 === 0) add($("vruler"), "text", { transform: `translate(11 ${y + 3}) rotate(-90)`, "text-anchor": "end" }, v);
}
add($("vruler"), "path", { d: "M0 717.5H19", stroke: "#f00" });

/* Survey sheets: NW, NE, SW, SE, each with its own origin and scale */
const SHEET = {
  A: (x, y) => [(x - 28) / 2.8, (y - 48) / 3],
  B: (x, y) => [540 + x / 2.703, (y - 48) / 3],
  C: (x, y) => [(x - 28) / 2.8, 264 + y / 3],
  D: (x, y) => [540 + x / 2.703, 264 + y / 3]
};
function pts(s) {
  let f = SHEET.A; const out = [];
  for (const t of s.trim().split(/\s+/)) {
    if (SHEET[t]) f = SHEET[t]; else out.push(f(...t.split(",").map(Number)));
  }
  return out;
}
let seed = 7;
const rnd = () => (seed = (seed * 16807) % 2147483647) / 2147483647;
const fmt = p => p[0].toFixed(1) + " " + p[1].toFixed(1);
function smooth(p) {
  let d = "M" + fmt(p[0]);
  for (let i = 0; i < p.length - 1; i++) {
    const a = p[i - 1] || p[i], b = p[i], c = p[i + 1], e = p[i + 2] || c;
    d += `C${fmt([b[0] + (c[0] - a[0]) / 6, b[1] + (c[1] - a[1]) / 6])} ${fmt([c[0] - (e[0] - b[0]) / 6, c[1] - (e[1] - b[1]) / 6])} ${fmt(c)}`;
  }
  return d;
}
/* Round the course first, so the jitter rides on a curve */
function spline(p) {
  const o = [p[0]];
  for (let i = 0; i < p.length - 1; i++) {
    const a = p[i - 1] || p[i], b = p[i], c = p[i + 1], e = p[i + 2] || c;
    for (let k = 1; k <= 5; k++) {
      const t = k / 5;
      o.push([0, 1].map(n => .5 * (2 * b[n] + (c[n] - a[n]) * t + (2 * a[n] - 5 * b[n] + 4 * c[n] - e[n]) * t * t + (3 * b[n] - a[n] - 3 * c[n] + e[n]) * t * t * t)));
    }
  }
  return o;
}
function meander(p, amp) {
  const o = [p[0]];
  for (let i = 1; i < p.length; i++) {
    const [ax, ay] = p[i - 1], [bx, by] = p[i], L = Math.hypot(bx - ax, by - ay) || 1;
    const n = Math.max(1, Math.round(L / 2.2));
    for (let k = 1; k <= n; k++) {
      const j = (rnd() - .5) * 2 * amp;
      o.push([ax + (bx - ax) * k / n - (by - ay) / L * j, ay + (by - ay) * k / n + (bx - ax) / L * j]);
    }
  }
  return o;
}
function line(g, p, color, w, amp) {
  add($(g), "path", { d: smooth(amp ? meander(spline(p), amp) : p), fill: "none", stroke: color, "stroke-width": w, "stroke-linejoin": "round", "stroke-linecap": "round" });
}

const MISS = "C 145,545 131,515 140,500 160,503 170,525 158,550 165,558 180,552 190,530 195,505 212,490 228,492 245,512 262,505";
const OHIO = "C 262,505 275,470 290,440 297,415 290,380 300,345 307,318 285,300 280,280 310,240 330,210 355,198 385,205 430,238 480,255 500,278 530,283 545,262 553,240 540,210 521,180 538,125 560,112 577,120 605,98 650,93 683,88 685,70 665,45 655,20 A 652,845 660,820 690,795 705,773 728,787 745,765 738,730 750,713 770,738 800,738 822,728 830,745 825,762 840,768 858,750 848,720 858,695 870,715 885,722 910,708 935,712 985,755 1010,765 1022,788 1040,788 1050,760 1055,730 1100,713 1130,686 1145,700 1158,730 1170,738 1185,728 1192,762 1205,755 1215,728 1240,722 1238,668 1262,662 1270,645 1258,630 1270,626 1285,636 1308,622 1290,605 1292,592 1305,597 1325,620 1327,655 1360,682 1385,680 1408,705 1413,690 1445,685 1455,650 1458,605 1480,575 1480,555 1498,548 1512,560 1540,540 1553,510 1560,480 B 25,472 50,468 68,440 88,430 82,385 75,340 130,331 147,345 165,357 200,335 235,314 292,305 288,288 300,268 290,254 270,248 285,220 263,178 285,155 297,148 312,134 350,168 380,155 395,160 407,144 417,160 418,178 440,185 460,195 465,215 485,245 488,290 505,300 545,311 578,302 615,318 622,338 640,345 648,367 685,378 693,352 730,340 760,355 790,362 808,388 820,375 855,378 868,355 895,328 915,320 942,308 952,330 955,365 965,392 980,402 1005,402 1042,440 1050,475";
const SANDY = "B 1050,475 1056,520 1048,550 1046,580 1036,600 1052,620";
const TUG = "B 1052,620 1085,665 1090,690 1115,720 1130,755 1150,775 1165,822 1200,835 1220,868 D 1230,35 1250,42 1280,38";
const EDGE = "D 1280,38 1160,168 1100,195 1060,225 1022,250 1022,285 1000,305 975,322 975,360 940,380 905,385 885,410 885,436 840,448 785,475 745,480 710,500 692,520 400,518 300,517 200,509 50,512 C 1568,512 1480,510 1340,500 1240,493 1217,500 1210,493 752,495 752,478 680,473 682,556 225,540 160,540";

const outline = "M" + [MISS, OHIO, SANDY, TUG, EDGE].flatMap(s => pts(s)).map(fmt).join("L") + "Z";
$("statePath").setAttribute("d", outline);
$("stateFill").setAttribute("d", outline);
$("border").setAttribute("d", "M" + pts(EDGE).map(fmt).join("L"));

/* Built-up areas */
[
  "B 335,48 355,60 350,85 330,100 312,125 350,168 395,160 410,150 420,180 470,190 490,215 510,205 500,185 550,178 520,165 525,145 490,150 480,130 505,115 505,90 480,75 495,48",
  "B 312,150 320,200 345,250 385,235 400,210 395,165 350,168", "B 265,88 270,120 285,132 280,105",
  "A 1500,460 1490,500 1470,520 1435,518 1460,540 1425,545 1450,560 1480,548 1500,550 1540,530 1530,500 1515,510 1520,485",
  "A 1480,570 1460,600 1455,660 1490,650 1520,665 1520,700 1568,670 1568,500 1545,545", "B 0,545 30,500 75,485 105,495 90,520 75,550 55,600 30,650 45,665 0,680",
  "A 875,625 865,660 840,672 808,708 850,708 870,720 940,705 942,660 930,660 915,695 895,670 892,640",
  "A 1000,785 1005,805 1030,820 1055,805 1060,785 1040,790", "A 860,745 845,775 870,775", "A 1435,720 1420,775 1440,790 1455,780", "A 1460,800 1445,850 1470,868 1488,820", "A 735,825 745,840 765,832",
  "B 385,630 365,685 410,715 440,690 425,650", "B 490,680 500,705 530,685 510,672", "B 320,650 315,670 345,662", "B 375,565 370,590 392,600 390,575", "B 280,580 250,610 300,595", "B 150,570 135,590 170,595", "B 50,740 60,780 100,775", "B 370,735 355,760 385,755", "B 460,790 450,815 490,810", "B 895,305 965,310 955,330 930,325", "B 985,405 1005,440 1020,460 1045,460 1030,425", "B 1050,475 1065,495 1105,485 1150,478 1165,490 1155,468 1215,458 1240,460 1285,442 1260,437 1235,455 1180,452 1110,450", "B 85,305 65,345 100,325", "B 300,840 305,868 320,845", "B 580,650 590,665 600,640", "B 755,585 765,600 770,585",
  "C 450,262 425,280 460,305 485,300 515,320 520,290 490,265", "C 875,475 900,490 960,505 970,545 1000,562 970,578 920,572 925,545 895,515", "C 1230,335 1240,370 1275,365 1285,330 1260,315", "C 870,375 880,410 900,385", "C 880,125 870,160 885,180 900,160", "C 575,490 570,515 590,515 595,488", "C 1215,515 1240,545 1250,525", "C 1440,325 1450,345 1462,320", "C 1090,395 1100,410 1110,395", "C 460,425 465,450 475,440", "C 740,260 745,275 755,262", "C 1310,85 1320,100 1330,85", "C 565,378 575,390 580,378", "C 1440,255 1440,265 1462,240",
  "D 355,220 360,260 345,310 370,318 382,265 368,255", "D 537,220 535,280 540,360 580,348 555,320 565,270 545,250", "D 300,10 300,50 320,25 312,5", "D 470,25 465,50 490,45", "D 850,170 855,200 865,185", "D 665,500 680,515 692,495", "D 700,520 705,540 715,525", "D 108,145 105,165 120,165", "D 280,390 285,415 292,395", "D 140,45 142,62 150,52", "D 655,235 660,255 665,240", "D 345,60 348,72 355,62", "D 618,380 620,395 635,385", "D 120,265 125,285 132,272"
].forEach(s => { const p = pts(s); p.push(p[0]); add($("urban"), "path", { d: "M" + meander(p, 1.8).map(fmt).join("L") + "Z" }); });

/* Named rivers: class, then the course */
const MED = [
  "A 885,868 890,850 920,840 930,808 955,800 968,790 955,770 930,775 915,730 860,722",
  "C 925,0 890,5 890,30 925,40 940,68 975,70 1025,95 1030,145 1015,165 1045,148 1070,175 1075,200 1100,220 1115,203 1150,220 1128,170 1140,165 1165,200 1195,235",
  "C 553,242 570,240 570,218 600,225 635,230 630,260 622,290 625,310 650,318 655,298 670,293 685,300", "C 503,282 525,300 580,283 605,310"
];
const STRONG = [
  "C 1195,235 1260,250 1310,250 1320,228 1370,240 1390,220 1440,205 1480,185 1525,180 1568,190 D 40,210 80,200 130,215 155,235",
  "C 1195,235 1215,275 1250,300 1285,330 1330,350 1385,380",
  "B 165,357 200,380 215,415 240,460 265,490 270,530", "B 1052,620 1040,660 1028,710 990,760 995,790 1015,830 D 1020,0 1040,40 1080,65 1090,95 1120,120 1135,145 1160,165",
  "B 395,160 410,210 412,280 445,300 455,355", "D 365,325 380,400 397,430 397,505 370,525", "D 360,325 400,345 430,340 475,350 475,380 462,420 470,438 505,440 515,428 530,450 570,450 600,420 615,390"
];
const WEAK = [
  "D 155,235 240,225 240,190 300,150 345,110 380,60", "C 1385,380 1410,440 1420,480 1495,500", "B 270,530 275,620 290,680 305,745 340,770 375,810 410,780 430,745 475,730 540,755 545,790 600,830 635,868 D 655,50 700,30 720,5 780,30 800,70 795,130 810,170 860,190 900,245 960,255 1010,240",
  "B 455,355 500,420 580,480 630,540 670,560 700,600 740,630 770,665 800,700 860,750 875,800 870,868", "B 455,355 430,400 465,470 480,530 490,580 515,640 520,690", "B 205,390 305,340 320,380 335,430 340,475 400,500", "B 305,340 330,330 315,300",
  "A 1445,685 1520,690 1568,685 B 40,685 110,685 130,600 180,500 215,440", "A 1455,690 1480,740 1520,790 1568,805 B 40,805 90,815 140,760 180,740 230,770 240,810", "A 1480,720 1510,690 1568,685", "B 40,690 60,730 90,750",
  "C 685,70 705,55 730,100 745,125 770,140 775,180 825,240", "C 1025,95 1060,95 1090,115 1115,60 1160,60 1210,65 1255,35 1320,50 1370,30", "C 1165,60 1200,120 1260,120", "C 1330,225 1340,180 1400,160 1408,80 1440,40 1480,55 1568,20", "C 940,68 940,130 950,150 930,195 945,240 950,290", "C 790,155 800,200 830,245",
  "C 715,388 750,375 790,335", "C 750,375 790,400 815,435 855,445 875,400 895,380", "C 1285,330 1280,400 1230,425 1225,480", "C 1385,380 1430,345 1470,345 1500,310", "C 1520,180 1550,220 1560,280 1555,350", "C 1385,380 1450,370 1500,400 1568,395",
  "C 307,340 355,345 400,330 440,330", "C 310,450 355,415 390,435 440,480 510,490", "C 505,290 505,380", "C 500,300 530,345 580,370 600,420 595,490", "C 262,505 330,480 400,490 430,515",
  "D 470,345 475,280 490,220 505,180 500,150 455,135", "D 615,390 660,400 705,450 740,415 810,385 900,335 1000,285", "D 820,385 850,410 840,440", "D 690,440 700,480 680,515", "D 530,450 545,495 565,525", "D 685,45 695,150 695,200 665,240 590,250", "D 700,40 750,60 765,180 790,180 800,280 790,350", "D 695,200 720,280 740,340", "D 580,0 605,30 605,100", "D 0,230 15,280 20,340", "D 50,210 80,260 130,275 170,300", "D 430,320 425,240 380,190 350,130", "D 25,0 25,60 70,60 130,85 180,90", "D 340,0 380,80 420,105",
  "B 480,535 510,520 580,580 590,640", "B 290,565 320,560 350,600 365,650", "B 545,760 600,745 660,755 740,770 800,775", "B 930,320 935,420 925,530 890,600 895,650", "B 820,440 850,385", "B 800,700 840,700", "B 965,395 940,480 930,530 950,600", "B 965,430 1000,440 1010,480", "B 1036,600 1025,570 1020,640 960,660", "B 990,760 920,720 890,690", "B 670,565 665,620 700,680", "B 780,490 820,440", "B 715,540 760,490 780,500 750,560", "B 1010,815 1070,820 1150,840", "D 975,60 990,100 985,130", "D 1090,100 1070,150 1030,190 940,200"
];
/* Unnamed creeks branch off every weak and strong course */
function creek(x, y, a, len, depth) {
  const p = [[x, y]];
  let t = a;
  for (let s = 0; s < len; s += 4) {
    t += (rnd() - .5) * 1.3 + (a - t) * .25;
    x += Math.cos(t) * 4; y += Math.sin(t) * 4; p.push([x, y]);
    if (depth && rnd() < .15) creek(x, y, t + (rnd() < .5 ? -1 : 1) * .9, len * .55, depth - 1);
  }
  line("minor", p, depth ? "#172e5a" : "#152542", .85, .5);
}
[...WEAK, ...STRONG, ...MED].forEach(s => {
  const p = pts(s);
  let side = 1;
  for (let i = 1; i < p.length; i++) {
    const [ax, ay] = p[i - 1], [bx, by] = p[i], L = Math.hypot(bx - ax, by - ay), th = Math.atan2(by - ay, bx - ax);
    for (let k = 7; k < L + 4; k += 16) { creek(ax + (bx - ax) * Math.min(1, k / L), ay + (by - ay) * Math.min(1, k / L), th + side * (.7 + rnd() * .6), 16 + rnd() * 32, 1); side = -side; }
  }
});
WEAK.forEach(s => line("rivers", pts(s), "#1f4c98", 1, 1.1));
STRONG.forEach(s => line("rivers", pts(s), "#2b78f0", 1.6, 1));
MED.forEach(s => line("rivers", pts(s), "#2f7dfb", 1.7, .2));
line("rivers", pts("D 60,515 58,490 35,475 45,462 60,480 75,465 55,450 65,440 85,458 105,440 110,410 125,398 138,412 145,390 160,385 155,398 185,380 190,390 215,385 225,370 245,370 255,348 270,350 275,370 290,345 320,345 360,325"), "#2f7dfb", 2, 0);
line("rivers", pts(SANDY), "#2f7dfb", 1.7, .4);
line("rivers", pts(TUG), "#4d7fd0", 1.2, .9);
line("rivers", pts("B 1050,472 1070,470 1110,455 1142,448 1150,380 1180,378 1190,360 1180,310 1168,285 1190,270 1197,248"), "#5a8fe0", 1.2, 0);
line("rivers", pts(OHIO), "#2f7fff", 2.1, 0);
line("rivers", pts(MISS), "#3f87ff", 2.1, 0);
line("rivers", pts("C 145,545 140,570 148,600 135,615 110,614 108,628 128,645 122,660 85,660 82,670 105,692 115,712 105,725 85,735 70,775 68,790 88,815 85,832 70,825 52,820 44,835 70,857"), "#70a8ff", 1.9, 0);
line("rivers", pts("C 198,505 205,480 220,480 222,495"), "#70a8ff", 1, 0);

/* Reservoirs: thick water with short side arms */
function lake(s, color, w, arms) {
  const p = pts(s);
  line("rivers", p, color, w, .4);
  meander(p, .3).forEach(([x, y], i) => {
    if (rnd() < arms) { const a = (i % 2 ? 0 : Math.PI) + (rnd() - .5), r = 2.5 + rnd() * 3; line("rivers", [[x, y], [x + Math.cos(a) * r, y + Math.sin(a) * r]], color, 1, 0); }
  });
}
lake("C 605,315 625,345 640,380 655,430 672,480 683,520 683,555", "#4a8eff", 3.2, .35);
lake("C 683,555 672,595 700,635 712,680 722,725 718,745 690,780", "#70a8ff", 3.4, .4);
lake("C 672,595 655,625 660,680", "#70a8ff", 2.4, .5);
lake("C 690,780 680,800 695,828 712,830 730,800", "#70a8ff", 1.6, .3);
lake("C 720,825 712,857", "#70a8ff", 2.4, .3);
lake("C 685,300 695,345 708,390 710,440 725,470", "#3a84ff", 2.2, .35);
lake("C 725,470 735,500 740,540 760,562 785,560 810,590 830,608", "#5d98f5", 1.4, .1);
lake("C 180,590 215,570 222,535", "#70a8ff", 2, .8);
lake("C 715,388 745,375", "#5d98f5", 1.8, .5);
lake("C 795,152 830,165 855,178", "#70a8ff", 1.5, .5);
lake("C 1385,380 1410,345", "#5d98f5", 1.5, .4);
lake("C 1340,190 1345,165 1370,160", "#70a8ff", 1.2, .4);
lake("C 1240,35 1270,28", "#70a8ff", 1.5, .5);
lake("D 85,550 105,520 130,512 175,508", "#70a8ff", 2, .5);
lake("D 130,512 150,535 172,555", "#70a8ff", 1.5, .3);
lake("D 118,490 130,512 145,490", "#70a8ff", 1.3, .3);
lake("D 185,385 218,385 235,350 265,322", "#5b97ff", 1.6, .5);
lake("D 218,385 245,400", "#5b97ff", 1.3, .5);
lake("D 120,215 130,185", "#70a8ff", 1.4, .5);
lake("D 345,325 345,290", "#5b97ff", 1.2, .2);
lake("D 510,320 490,345 520,350", "#5b97ff", 1.4, .5);
lake("B 730,628 755,640 743,670", "#5b97ff", 1.8, .5);
lake("B 125,682 155,690", "#70a8ff", 1.2, .4);
lake("B 328,770 330,810 322,830", "#5b97ff", 1.5, .3);
["C 314,272 320,255", "C 352,346 380,334", "C 388,434 394,442", "C 503,370 503,382", "C 556,360 565,364", "A 800,735 822,731", "A 768,765 768,775", "D 510,220 518,235"].forEach(s => line("rivers", pts(s), "#70a8ff", 1.8, 0));
```
